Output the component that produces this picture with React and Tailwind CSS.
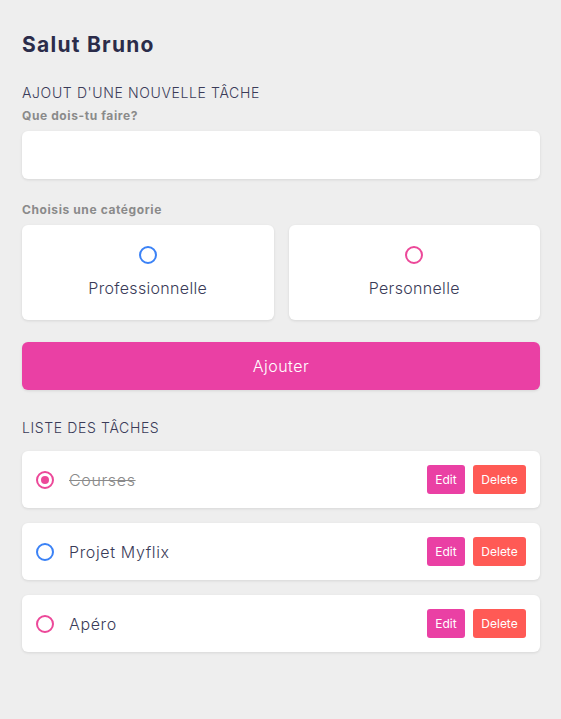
import React, { useState } from 'react';

const tasks = [
  { id: 1, title: 'Courses', category: 'perso', done: true },
  { id: 2, title: 'Projet Myflix', category: 'pro', done: false },
  { id: 3, title: 'Apéro', category: 'perso', done: false },
];

const App = () => {
  const [category, setCategory] = useState(null);

  const ringColor = (cat) => (cat === 'pro' ? 'border-[#3b82f6]' : 'border-[#ec4899]');

  return (
    <div className="min-h-[719px] bg-[#eeeeee] pl-[22px] pr-[21px] pt-[32px] pb-8 font-['Inter',sans-serif] text-[#2f3048]">
      <h1 className="text-[21px] font-bold leading-[26px] tracking-[0.06em] text-[#2b2c4a]">Salut Bruno</h1>

      {/* Nouvelle tâche */}
      <h2 className="mt-[26px] text-[14px] font-light uppercase leading-[18px] tracking-[0.045em] text-[#3a3b58]">
        Ajout d'une nouvelle tâche
      </h2>
      <label className="mt-[6px] block text-[12px] font-bold leading-[16px] tracking-[0.05em] text-[#8a8a8a]">
        Que dois-tu faire?
      </label>
      <input
        type="text"
        className="mt-[7px] block h-[48px] w-full rounded-md bg-white px-3 shadow-[0_1px_3px_rgba(0,0,0,0.1)] outline-none"
      />

      <label className="mt-[23px] block text-[12px] font-bold leading-[16px] tracking-[0.05em] text-[#8a8a8a]">
        Choisis une catégorie
      </label>
      <div className="mt-[7px] grid grid-cols-2 gap-[15px]">
        {[
          { key: 'pro', label: 'Professionnelle' },
          { key: 'perso', label: 'Personnelle' },
        ].map((c) => (
          <button
            key={c.key}
            onClick={() => setCategory(c.key)}
            className="flex h-[95px] flex-col items-center rounded-md bg-white pt-[21px] shadow-[0_1px_3px_rgba(0,0,0,0.1)]"
          >
            <span className={`h-[18px] w-[18px] rounded-full border-2 ${ringColor(c.key)}`}></span>
            <span className="mt-[14px] text-[16px] font-light leading-[20px] tracking-[0.02em] text-[#3a3b58]">{c.label}</span>
          </button>
        ))}
      </div>

      <button className="mt-[22px] h-[48px] w-full rounded-md bg-[#ea40a4] text-[16px] font-light tracking-[0.03em] text-white shadow-[0_1px_3px_rgba(0,0,0,0.1)]">
        Ajouter
      </button>

      {/* Liste */}
      <h2 className="mt-[29px] text-[14px] font-light uppercase leading-[18px] tracking-[0.045em] text-[#3a3b58]">
        Liste des tâches
      </h2>
      <div className="mt-[14px] flex flex-col gap-[15px]">
        {tasks.map((task) => (
          <div
            key={task.id}
            className="flex h-[57px] items-center rounded-md bg-white pl-[14px] pr-[14px] shadow-[0_1px_3px_rgba(0,0,0,0.1)]"
          >
            <span
              className={`flex h-[18px] w-[18px] items-center justify-center rounded-full border-2 ${ringColor(task.category)}`}
            >
              {task.done && <span className="h-[8px] w-[8px] rounded-full bg-[#ec4899]"></span>}
            </span>
            <span
              className={`ml-[15px] text-[16px] font-light tracking-[0.04em] ${
                task.done ? 'text-[#8a8a8a] line-through' : 'text-[#3a3b58]'
              }`}
            >
              {task.title}
            </span>
            <div className="ml-auto flex gap-[8px]">
              <button className="h-[29px] w-[38px] rounded-[3px] bg-[#ea40a4] text-[12px] text-white">Edit</button>
              <button className="h-[29px] w-[53px] rounded-[3px] bg-[#ff5a55] text-[12px] text-white">Delete</button>
            </div>
          </div>
        ))}
      </div>
    </div>
  );
};

export default App;
